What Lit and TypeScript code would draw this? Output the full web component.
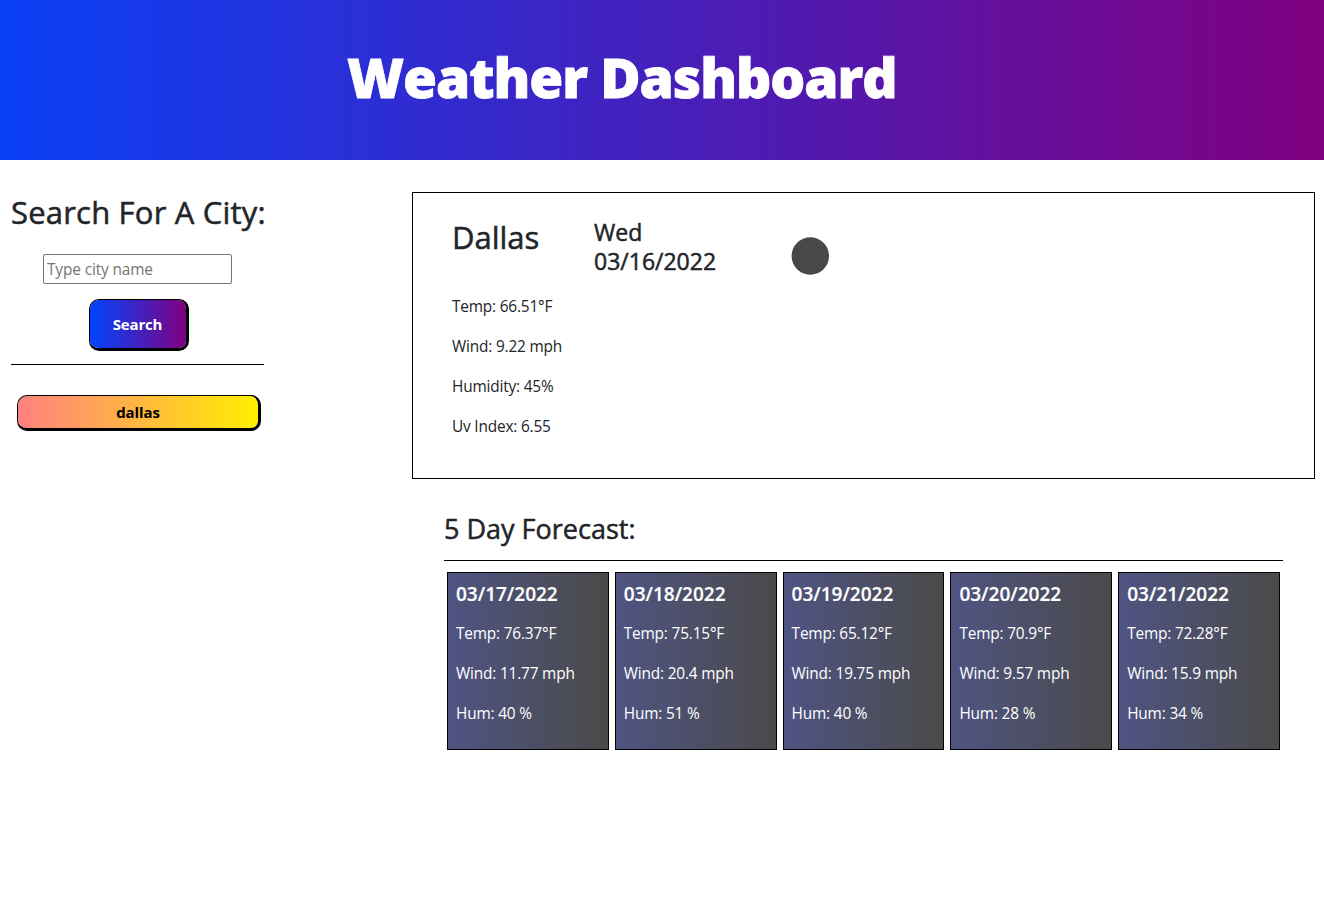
import { LitElement, html, css } from "lit";
import { customElement } from "lit/decorators.js";

interface Day { date: string; temp: string; wind: string; hum: string; }

const days: Day[] = [
  { date: "03/17/2022", temp: "76.37", wind: "11.77", hum: "40" },
  { date: "03/18/2022", temp: "75.15", wind: "20.4", hum: "51" },
  { date: "03/19/2022", temp: "65.12", wind: "19.75", hum: "40" },
  { date: "03/20/2022", temp: "70.9", wind: "9.57", hum: "28" },
  { date: "03/21/2022", temp: "72.28", wind: "15.9", hum: "34" },
];

@customElement("app-root")
export class AppRoot extends LitElement {
  static styles = css`
    :host { display: block; height: 919px; overflow: hidden; background: #fff; color: #212529;
      font: 400 15.4px/24px "Open Sans", "Noto Sans", sans-serif; }
    * { box-sizing: border-box; }
    h1, h2, h3, h4, p { margin: 0; white-space: nowrap; }
    .header { height: 160px; padding: 35px 0 0 347px;
      background: linear-gradient(to right, #0a40f6, #800080); }
    .title { font-size: 55px; line-height: 84px; font-weight: 800; color: #fff; letter-spacing: -1.05px; -webkit-text-stroke: 0.8px #fff; }
    .page { display: flex; justify-content: space-between; padding: 32px 9px 0 11px; }
    .side { width: 253px; display: flex; flex-direction: column; align-items: center; }
    .find, .name, .date, .heading { font-weight: 400; -webkit-text-stroke: 0.5px #212529; }
    .find { align-self: flex-start; font-size: 31px; line-height: 38px; letter-spacing: 0.2px; margin-top: 1px; }
    .city { width: 189px; height: 30px; margin-top: 23px; padding: 2px 2px 1px 3px;
      border: 1px solid #767676; border-radius: 2px; font: inherit; letter-spacing: -0.12px; color: #212529; }
    .city::placeholder { color: #757575; opacity: 1; }
    .search, .recent { font: inherit; font-size: 15px; font-weight: 700; border: 1px solid #000; border-width: 1px 3px 3px 1px; border-radius: 10px; padding: 0; }
    .search { width: 100px; height: 52px; margin: 15px 0 0 2px; letter-spacing: -0.15px; color: #fff; background: linear-gradient(to right, #0044ff, #800080) padding-box; }
    .rule { width: 100%; height: 1px; background: #000; }
    .side .rule { margin-top: 13px; }
    .recent { width: 244px; height: 36px; margin: 30px 0 0 3px; letter-spacing: -0.1px; color: #000; background: linear-gradient(to right, #ff8080, #ffee00) padding-box; }
    .main { width: 903px; }
    .today { height: 287px; border: 1px solid #000; padding: 25px 0 0 39px; }
    .top { display: flex; height: 77px; }
    .name { width: 142px; font-size: 31px; line-height: 38px; }
    .date { width: 197px; font-size: 23px; line-height: 29px; }
    .icon { width: 38px; height: 38px; margin-top: 19px; display: block; }
    .line { line-height: 24px; margin-bottom: 16px; letter-spacing: -0.18px; }
    .forecast { padding: 30px 32px 0; }
    .heading { font-size: 27px; line-height: 40px; margin-bottom: 11px; }
    .cards { display: grid; grid-template-columns: repeat(5, 1fr); gap: 6px; padding: 11px 3px 0; }
    .card { height: 178px; border: 1px solid #000; padding: 9px 8px 0; color: #fff;
      background: linear-gradient(to right, #4f5482, #4a4a4a); }
    .card h4 { font-size: 19px; line-height: 24px; font-weight: 600; margin-bottom: 16px; -webkit-text-stroke: 0.2px #fff; }
  `;

  render() {
    return html`
      <header class="header"><h1 class="title">Weather Dashboard</h1></header>
      <div class="page">
        <aside class="side">
          <h2 class="find">Search For A City:</h2>
          <input class="city" placeholder="Type city name" />
          <button class="search">Search</button>
          <div class="rule"></div>
          <button class="recent">dallas</button>
        </aside>
        <main class="main">
          <section class="today">
            <div class="top">
              <h2 class="name">Dallas</h2>
              <h3 class="date">Wed<br />03/16/2022</h3>
              <svg class="icon" viewBox="0 0 38 38"><circle cx="19.3" cy="19" r="18.7" fill="#48484a" /></svg>
            </div>
            <p class="line">Temp: 66.51°F</p>
            <p class="line">Wind: 9.22 mph</p>
            <p class="line">Humidity: 45%</p>
            <p class="line">Uv Index: 6.55</p>
          </section>
          <section class="forecast">
            <h3 class="heading">5 Day Forecast:</h3>
            <div class="rule"></div>
            <div class="cards">
              ${days.map((d) => html`<article class="card">
                <h4>${d.date}</h4>
                <p class="line">Temp: ${d.temp}°F</p>
                <p class="line">Wind: ${d.wind} mph</p>
                <p class="line">Hum: ${d.hum} %</p>
              </article>`)}
            </div>
          </section>
        </main>
      </div>
    `;
  }
}
